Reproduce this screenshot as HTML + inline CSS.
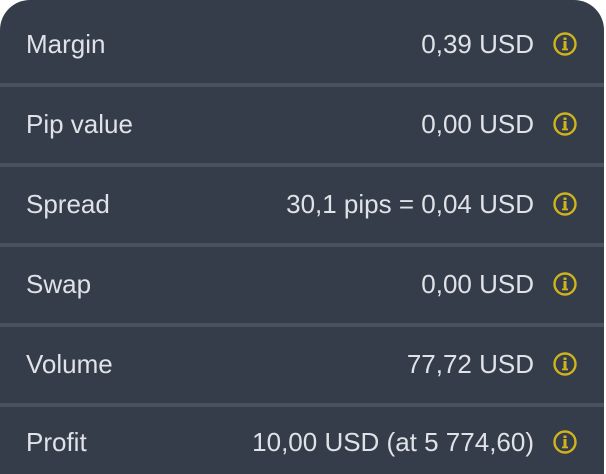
<!DOCTYPE html>
<html><head><style>
html,body{margin:0;padding:0;background:#fff;}
.card{position:absolute;left:0;top:0;width:604px;height:474px;background:#353d4a;border-radius:30px 30px 0 0;overflow:hidden;font-family:"Liberation Sans",sans-serif;}
.row{position:absolute;left:0;width:604px;height:80px;}
.row .l{position:absolute;left:26px;top:0;line-height:80px;font-size:26px;color:#dfe2e7;}
.row .r{position:absolute;right:70px;top:0;line-height:80px;font-size:26px;color:#dfe2e7;}
.row svg{position:absolute;left:552px;top:27px;}
.div{position:absolute;left:0;width:604px;height:4px;background:#4a525e;}
</style></head><body>
<div class="card">
<div class="row" style="top:4px"><span class="l">Margin</span><span class="r">0,39 USD</span><svg width="26" height="26" viewBox="0 0 26 26"><circle cx="13" cy="13" r="10.5" fill="none" stroke="#d0b41c" stroke-width="2.4"/><rect x="11.5" y="6.5" width="3" height="2.5" fill="#d0b41c"/><rect x="11.5" y="10" width="3" height="7.5" fill="#d0b41c"/><rect x="10" y="17.5" width="6" height="1.8" fill="#d0b41c"/></svg></div>
<div class="div" style="top:83px"></div>
<div class="row" style="top:84px"><span class="l">Pip value</span><span class="r">0,00 USD</span><svg width="26" height="26" viewBox="0 0 26 26"><circle cx="13" cy="13" r="10.5" fill="none" stroke="#d0b41c" stroke-width="2.4"/><rect x="11.5" y="6.5" width="3" height="2.5" fill="#d0b41c"/><rect x="11.5" y="10" width="3" height="7.5" fill="#d0b41c"/><rect x="10" y="17.5" width="6" height="1.8" fill="#d0b41c"/></svg></div>
<div class="div" style="top:163px"></div>
<div class="row" style="top:164px"><span class="l">Spread</span><span class="r">30,1 pips = 0,04 USD</span><svg width="26" height="26" viewBox="0 0 26 26"><circle cx="13" cy="13" r="10.5" fill="none" stroke="#d0b41c" stroke-width="2.4"/><rect x="11.5" y="6.5" width="3" height="2.5" fill="#d0b41c"/><rect x="11.5" y="10" width="3" height="7.5" fill="#d0b41c"/><rect x="10" y="17.5" width="6" height="1.8" fill="#d0b41c"/></svg></div>
<div class="div" style="top:243px"></div>
<div class="row" style="top:244px"><span class="l">Swap</span><span class="r">0,00 USD</span><svg width="26" height="26" viewBox="0 0 26 26"><circle cx="13" cy="13" r="10.5" fill="none" stroke="#d0b41c" stroke-width="2.4"/><rect x="11.5" y="6.5" width="3" height="2.5" fill="#d0b41c"/><rect x="11.5" y="10" width="3" height="7.5" fill="#d0b41c"/><rect x="10" y="17.5" width="6" height="1.8" fill="#d0b41c"/></svg></div>
<div class="div" style="top:323px"></div>
<div class="row" style="top:324px"><span class="l">Volume</span><span class="r">77,72 USD</span><svg width="26" height="26" viewBox="0 0 26 26"><circle cx="13" cy="13" r="10.5" fill="none" stroke="#d0b41c" stroke-width="2.4"/><rect x="11.5" y="6.5" width="3" height="2.5" fill="#d0b41c"/><rect x="11.5" y="10" width="3" height="7.5" fill="#d0b41c"/><rect x="10" y="17.5" width="6" height="1.8" fill="#d0b41c"/></svg></div>
<div class="div" style="top:403px"></div>
<div class="row" style="top:402px"><span class="l">Profit</span><span class="r">10,00 USD (at 5 774,60)</span><svg width="26" height="26" viewBox="0 0 26 26"><circle cx="13" cy="13" r="10.5" fill="none" stroke="#d0b41c" stroke-width="2.4"/><rect x="11.5" y="6.5" width="3" height="2.5" fill="#d0b41c"/><rect x="11.5" y="10" width="3" height="7.5" fill="#d0b41c"/><rect x="10" y="17.5" width="6" height="1.8" fill="#d0b41c"/></svg></div>
</div>
</body></html>
